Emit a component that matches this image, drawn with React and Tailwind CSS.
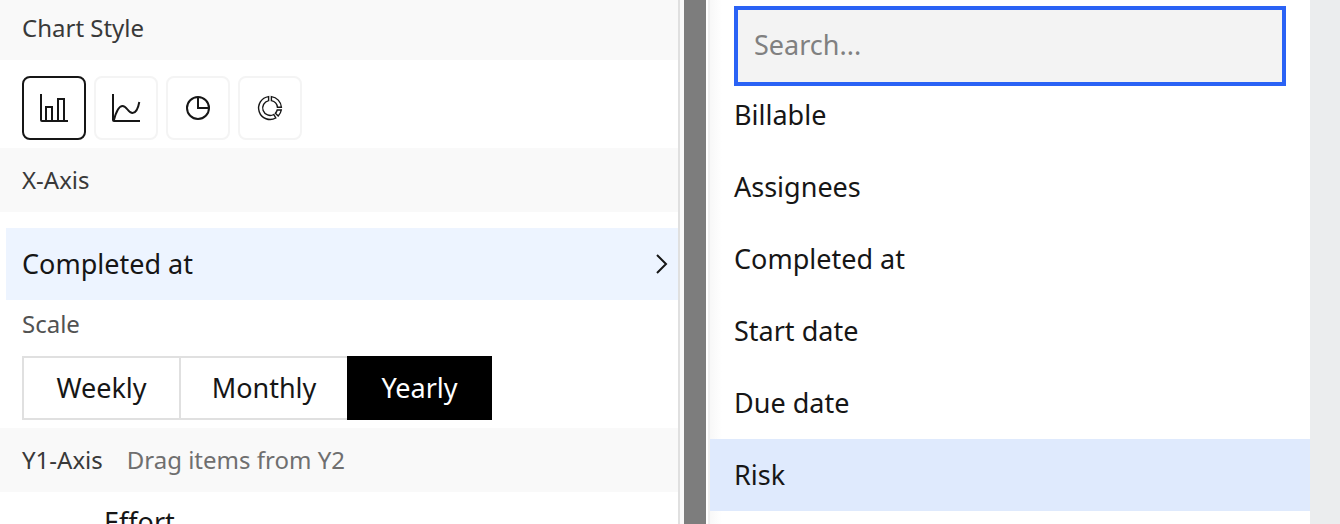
const chartStyles = [
  { id: 'bar', label: 'Bar chart', icon: <BarIcon /> },
  { id: 'line', label: 'Line chart', icon: <LineIcon /> },
  { id: 'pie', label: 'Pie chart', icon: <PieIcon /> },
  { id: 'donut', label: 'Donut chart', icon: <DonutIcon /> }
];

const scales = [
  { name: 'Weekly', width: 'w-[157px]' },
  { name: 'Monthly', width: 'w-[168px]' },
  { name: 'Yearly', width: 'w-[145px]' }
];

const fields = ['Billable', 'Assignees', 'Completed at', 'Start date', 'Due date', 'Risk'];

function BarIcon() {
  return (
    <svg viewBox="0 0 32 32" className="size-8" fill="currentColor" aria-hidden="true">
      <path d="M27,28V6H19V28H15V14H7V28H4V2H2V28a2,2,0,0,0,2,2H30V28ZM13,28H9V16h4Zm12,0H21V8h4Z" />
    </svg>
  );
}

function LineIcon() {
  return (
    <svg viewBox="0 0 32 32" className="size-8" fill="none" stroke="currentColor" strokeWidth="2" aria-hidden="true">
      <path d="M3 2V28a1 1 0 0 0 1 1H30" />
      <path d="M3.8 28.5C6 20 9 14 12.5 14C17 14 18 21 22.5 21C26 21 28 17 29.3 10" />
    </svg>
  );
}

function PieIcon() {
  return (
    <svg viewBox="0 0 32 32" className="size-8" fill="none" stroke="currentColor" strokeWidth="2" aria-hidden="true">
      <circle cx="16" cy="16" r="11" />
      <path d="M16 5V16H27" />
    </svg>
  );
}

function DonutIcon() {
  return (
    <svg viewBox="0 0 32 32" className="size-8" fill="none" stroke="currentColor" strokeWidth="1.4" aria-hidden="true">
      <path d="M14.6 4.6A11.5 11.5 0 1 0 21.8 26L19.8 22.5A7.5 7.5 0 1 1 14.6 8.6Z" />
      <path d="M17.4 4.6A11.5 11.5 0 0 1 27.4 15.2H23.4A7.5 7.5 0 0 0 17.4 8.6Z" />
      <path d="M27.3 18A11.5 11.5 0 0 1 24.2 24L21.4 21.2A7.5 7.5 0 0 0 23.2 18Z" />
    </svg>
  );
}

const SectionHeader = ({ title, hint, className }) => (
  <div className={`flex shrink-0 items-center gap-6 bg-[#f9f9f9] px-[22px] text-2xl text-[#393939] ${className}`}>
    <h2>{title}</h2>
    {hint && <p className="text-[#6f6f6f]">{hint}</p>}
  </div>
);

const ChartSettings = () => (
  <section className="flex min-w-0 flex-col overflow-hidden border-r-2 border-[#e0e0e0] bg-white">
    <SectionHeader title="Chart Style" className="h-15 pb-1" />
    <div className="flex gap-2 px-[22px] pt-4 pb-2">
      {chartStyles.map(({ id, label, icon }) => (
        <button
          key={id}
          type="button"
          aria-label={label}
          aria-pressed={id === 'bar'}
          className={`flex size-16 items-center justify-center rounded-lg border-2 ${id === 'bar' ? 'border-[#161616]' : 'border-[#f4f4f4]'}`}
        >
          {icon}
        </button>
      ))}
    </div>

    <SectionHeader title="X-Axis" className="h-16" />
    <button type="button" className="mt-4 ml-1.5 flex h-18 shrink-0 items-center justify-between bg-[#edf4ff] pr-2 pl-4 text-left">
      Completed at
      <svg viewBox="0 0 16 24" className="h-6 w-4" fill="none" stroke="currentColor" strokeWidth="2" aria-hidden="true">
        <path d="M3 3L12 12L3 21" />
      </svg>
    </button>

    <div className="px-[22px] py-2">
      <h3 className="mb-4 text-2xl text-[#525252]">Scale</h3>
      <div className="flex">
        {scales.map(({ name, width }) => (
          <button
            key={name}
            type="button"
            aria-pressed={name === 'Yearly'}
            className={`h-16 ${width} ${name === 'Yearly' ? 'bg-black text-white' : 'border-y-2 border-l-2 border-[#e0e0e0]'}`}
          >
            {name}
          </button>
        ))}
      </div>
    </div>

    <SectionHeader title="Y1-Axis" hint="Drag items from Y2" className="h-16" />
    <div className="flex h-16 shrink-0 items-center pb-1 pl-26">Effort</div>
  </section>
);

const FieldPicker = () => (
  <section className="min-w-0 overflow-hidden bg-linear-to-r from-[#f8f8f8] to-white to-[12px] pt-1.5">
    <input
      type="text"
      aria-label="Search fields"
      placeholder="Search..."
      className="mx-6 block h-20 w-[calc(100%-48px)] border-4 border-[#2a62f5] bg-[#f3f3f3] px-4 pb-1 outline-none placeholder:text-[#808080]"
    />
    <ul className="-mt-[7px]">
      {fields.map((field) => (
        <li key={field}>
          <button
            type="button"
            className={`flex h-18 w-full items-center px-6 text-left ${field === 'Risk' ? 'bg-[#dfeafd]' : ''}`}
          >
            {field}
          </button>
        </li>
      ))}
    </ul>
  </section>
);

export default function App() {
  return (
    <main className="grid h-screen grid-cols-[680fr_4px_22px_4px_600fr_30px] overflow-hidden bg-white font-['Noto_Sans',sans-serif] text-[27px] leading-9 text-[#161616]">
      <ChartSettings />
      <div className="bg-[#fafafa]" />
      <div className="bg-[#7d7d7d]" />
      <div className="border-r-2 border-[#efefef] bg-white" />
      <FieldPicker />
      <div className="bg-[#ebedee]" />
    </main>
  );
}
